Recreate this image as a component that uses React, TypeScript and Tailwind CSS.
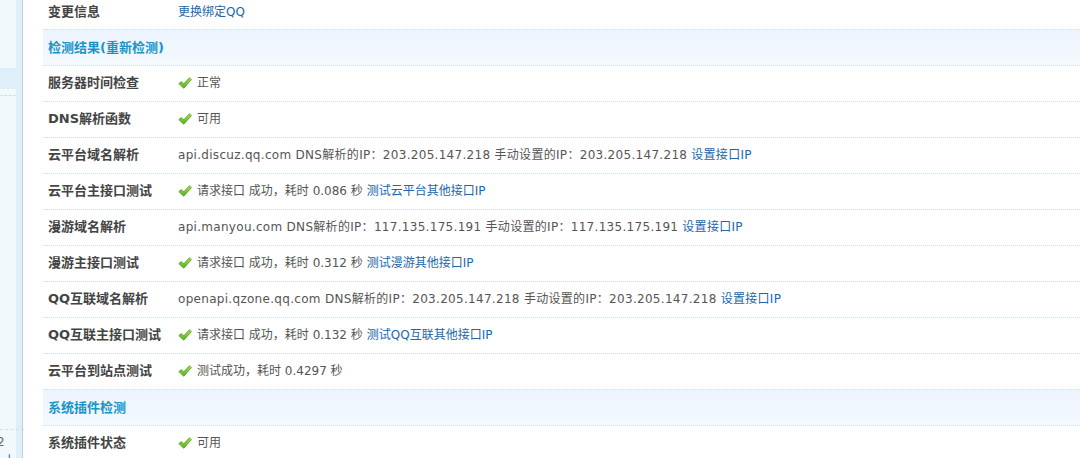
const font = { fontFamily: '"DejaVu Sans", "Noto Sans CJK SC", sans-serif' };

function Check() {
  return (
    <svg width="14" height="12" viewBox="0 0 14 12" className="mr-[5px] shrink-0">
      <defs>
        <linearGradient id="ck" x1="0" y1="0" x2="0" y2="1">
          <stop offset="0" stopColor="#a6e552" />
          <stop offset="1" stopColor="#56b01c" />
        </linearGradient>
      </defs>
      <path
        d="M0.8 6.6 L3.4 4.6 L5.6 7 L11.4 0.8 L13.4 2.6 L5.8 11.2 Z"
        fill="url(#ck)"
        stroke="#479a16"
        strokeWidth="0.8"
        strokeLinejoin="round"
      />
    </svg>
  );
}

function Row({
  label,
  children,
  first,
  wide,
}: {
  label: string;
  children: React.ReactNode;
  first?: boolean;
  wide?: boolean;
}) {
  return (
    <div
      className={
        first
          ? "flex h-[29px] items-center pb-[5px]"
          : "flex h-[36px] items-center border-t border-dotted border-[#c5dcee] pb-[1px]"
      }
    >
      <div className="w-[135px] pl-[5px] text-[13px] font-bold text-[#444]">{label}</div>
      <div className={wide ? "flex items-center text-[12px] tracking-[0.3px] text-[#555]" : "flex items-center text-[12px] text-[#555]"}>
        {children}
      </div>
    </div>
  );
}

function Header({ children }: { children: React.ReactNode }) {
  return (
    <div className="flex h-[36px] items-center border-t border-dotted border-[#c5dcee] bg-gradient-to-b from-[#ecf4fd] to-[#f4f9fe] pl-[5px] text-[13px] font-bold text-[#1a93c9]">
      {children}
    </div>
  );
}

const Link = ({ children }: { children: React.ReactNode }) => (
  <a className="ml-[4px] text-[#2366a8]">{children}</a>
);

export default function App() {
  return (
    <div className="flex h-[458px] w-[1080px] overflow-hidden bg-white" style={font}>
      <aside className="relative flex w-[23px] shrink-0 border-r border-[#b8d3e4] bg-[#deeffa]">
        <div className="flex w-[16px] flex-col bg-[#f2f9fd]">
          <div className="h-[68px]" />
          <div className="h-[21px] bg-[#deeffa]" />
          <div className="mt-[6px] border-t border-dashed border-[#cfdfe9]" />
          <div className="flex-1" />
        </div>
        <div className="absolute left-0 top-[429px] w-[24px] border-t border-dashed border-[#cfdfe9]" />
        <span className="absolute -left-[3px] top-[433px] text-[12px] text-[#666]">2</span>
        <span className="absolute left-[4px] top-[450px] text-[12px] text-[#2366a8]">↓</span>
      </aside>
      <main className="flex-1 pl-[20px]">
        <Row label="变更信息" first>
          <a className="text-[#2366a8]">更换绑定QQ</a>
        </Row>
        <Header>检测结果(重新检测)</Header>
        <Row label="服务器时间检查">
          <Check />正常
        </Row>
        <Row label="DNS解析函数">
          <Check />可用
        </Row>
        <Row label="云平台域名解析" wide>
          api.discuz.qq.com DNS解析的IP：203.205.147.218 手动设置的IP：203.205.147.218
          <Link>设置接口IP</Link>
        </Row>
        <Row label="云平台主接口测试">
          <Check />请求接口 成功，耗时 0.086 秒<Link>测试云平台其他接口IP</Link>
        </Row>
        <Row label="漫游域名解析" wide>
          api.manyou.com DNS解析的IP：117.135.175.191 手动设置的IP：117.135.175.191
          <Link>设置接口IP</Link>
        </Row>
        <Row label="漫游主接口测试">
          <Check />请求接口 成功，耗时 0.312 秒<Link>测试漫游其他接口IP</Link>
        </Row>
        <Row label="QQ互联域名解析" wide>
          openapi.qzone.qq.com DNS解析的IP：203.205.147.218 手动设置的IP：203.205.147.218
          <Link>设置接口IP</Link>
        </Row>
        <Row label="QQ互联主接口测试">
          <Check />请求接口 成功，耗时 0.132 秒<Link>测试QQ互联其他接口IP</Link>
        </Row>
        <Row label="云平台到站点测试">
          <Check />测试成功，耗时 0.4297 秒
        </Row>
        <Header>系统插件检测</Header>
        <Row label="系统插件状态">
          <Check />可用
        </Row>
      </main>
    </div>
  );
}
